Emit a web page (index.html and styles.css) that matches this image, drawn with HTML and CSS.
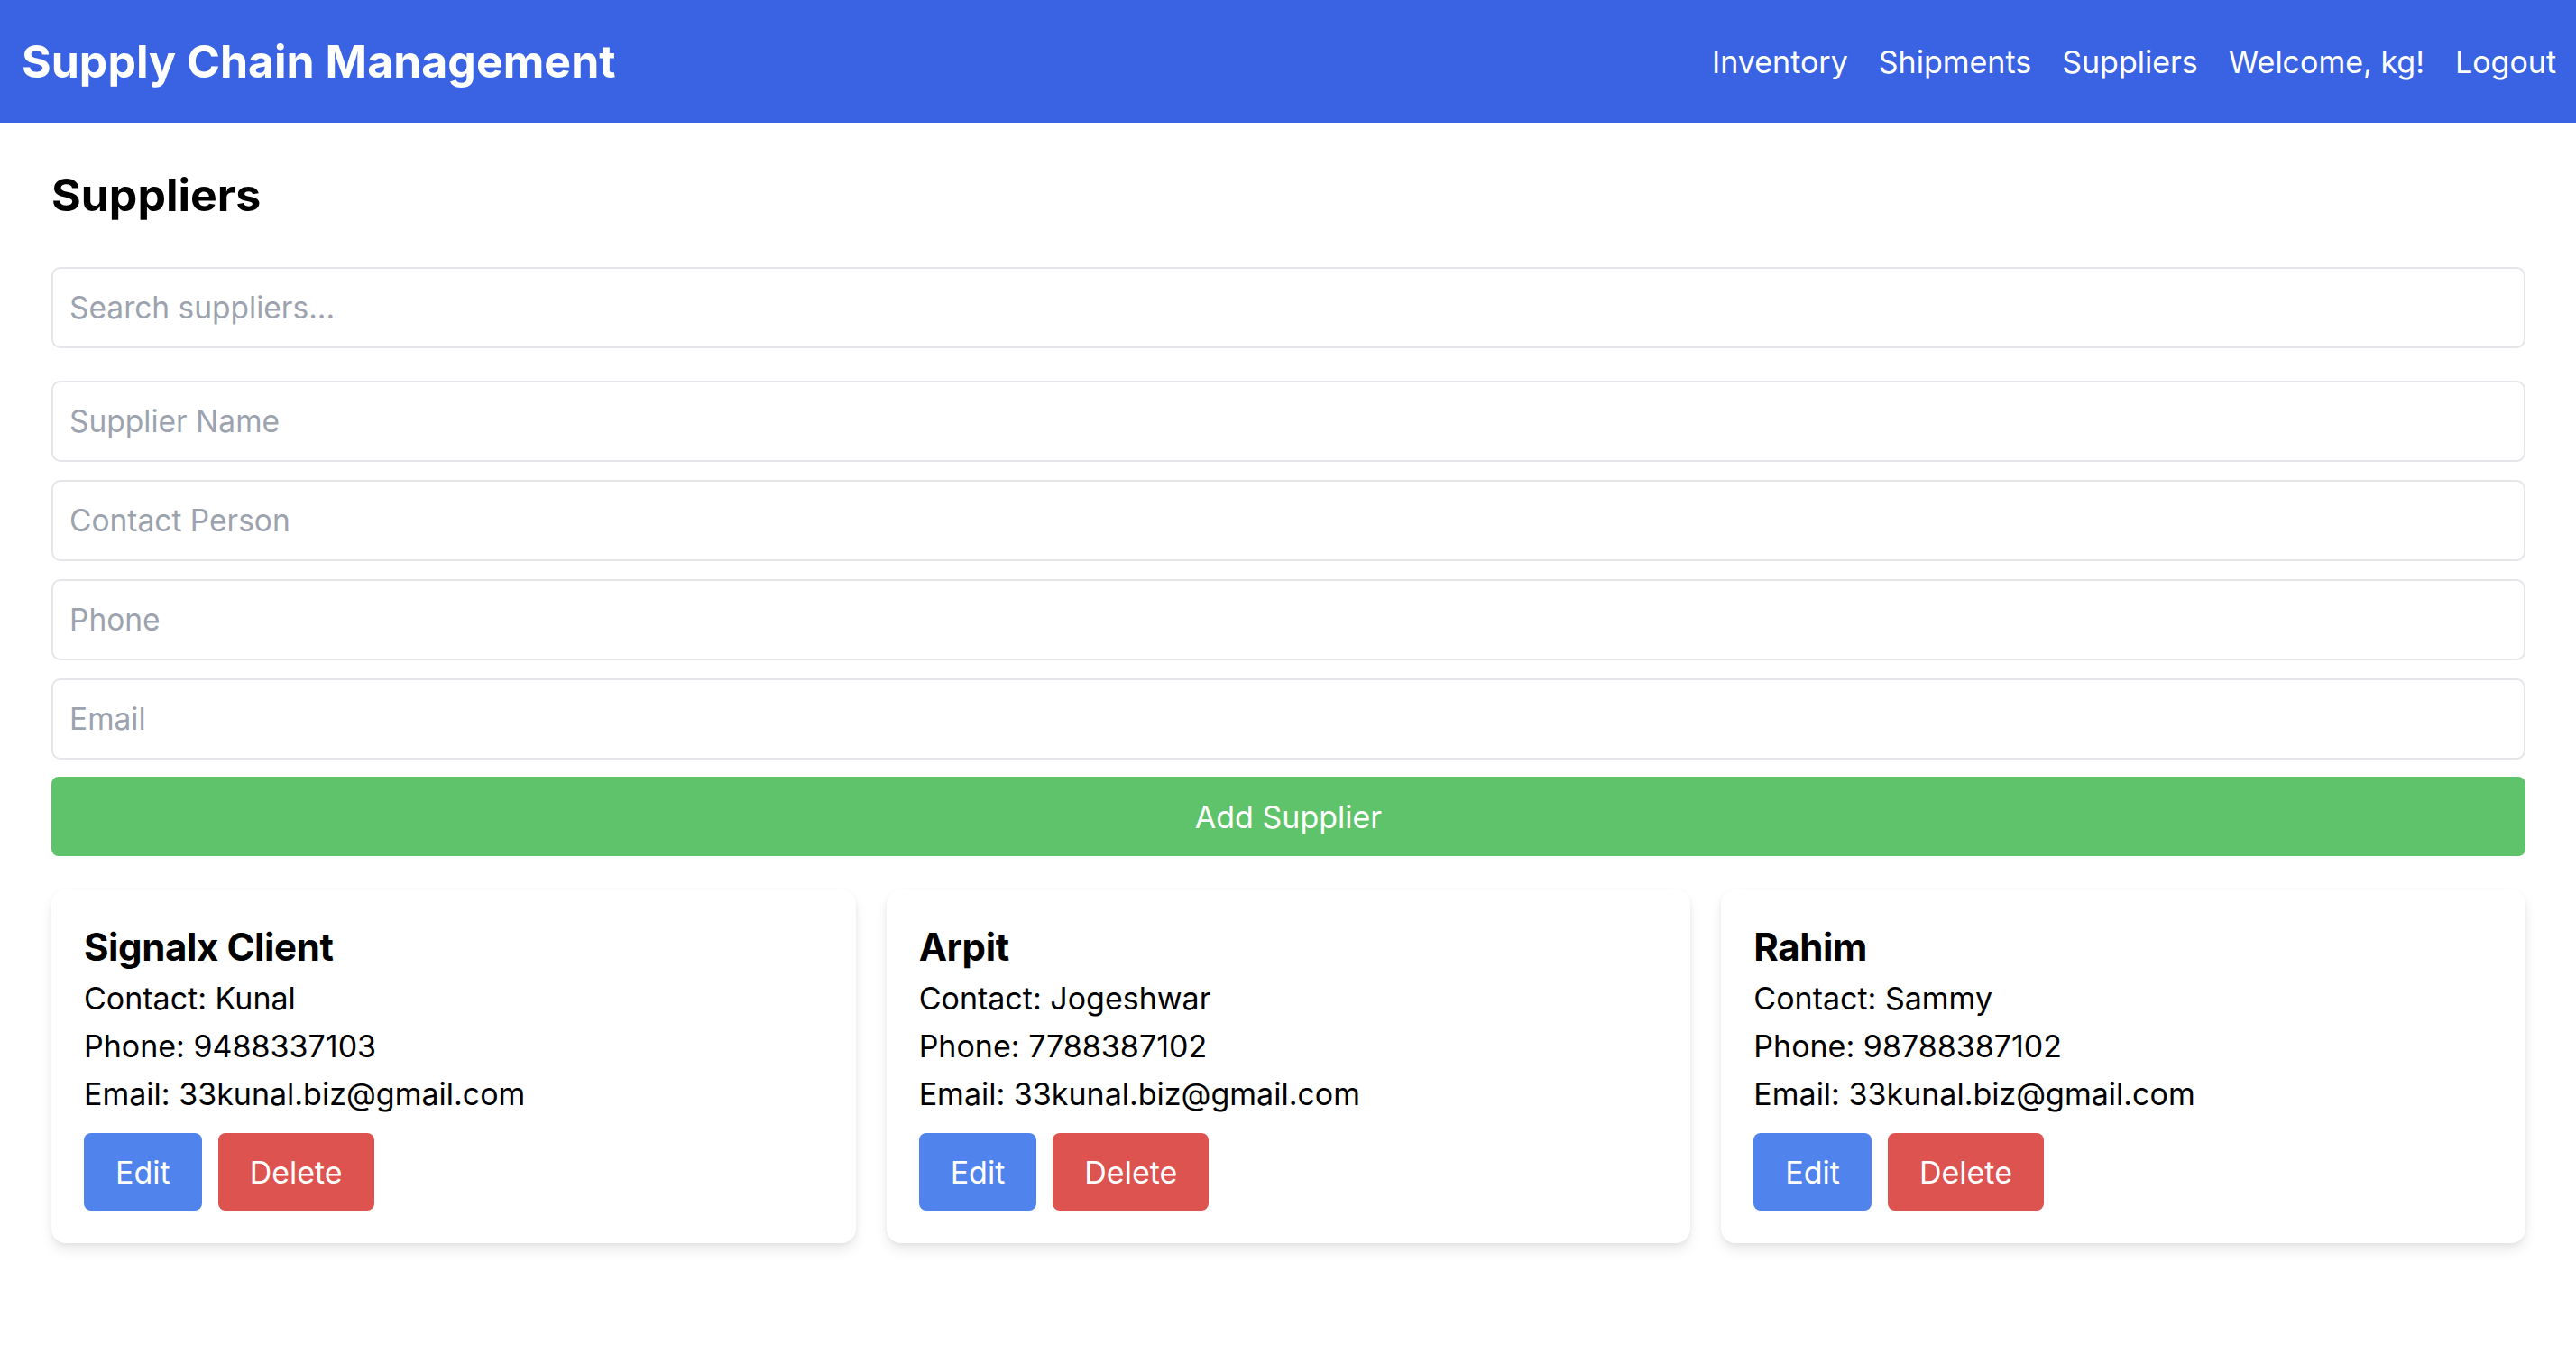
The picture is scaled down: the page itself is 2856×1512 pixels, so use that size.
FILE: index.html
```html
<!DOCTYPE html>
<html lang="en">
<head>
<meta charset="utf-8">
<title>Supply Chain Management</title>
<link rel="stylesheet" href="styles.css">
</head>
<body>
<header class="topbar">
  <div class="brand">Supply Chain Management</div>
  <nav class="nav">
    <a class="nav-link" href="#">Inventory</a>
    <a class="nav-link" href="#">Shipments</a>
    <a class="nav-link" href="#">Suppliers</a>
    <span class="nav-link">Welcome, kg!</span>
    <a class="nav-link" href="#">Logout</a>
  </nav>
</header>
<main class="page">
  <h1 class="page-title">Suppliers</h1>
  <input class="field search" type="text" placeholder="Search suppliers...">
  <form class="supplier-form">
    <input class="field" type="text" placeholder="Supplier Name">
    <input class="field" type="text" placeholder="Contact Person">
    <input class="field" type="text" placeholder="Phone">
    <input class="field" type="text" placeholder="Email">
    <button class="btn-add" type="button">Add Supplier</button>
  </form>
  <section class="cards">
    <div class="card">
      <h2 class="card-title">Signalx Client</h2>
      <p class="card-line">Contact: Kunal</p>
      <p class="card-line">Phone: 9488337103</p>
      <p class="card-line">Email: 33kunal.biz@gmail.com</p>
      <div class="card-actions">
        <button class="btn btn-edit" type="button">Edit</button>
        <button class="btn btn-delete" type="button">Delete</button>
      </div>
    </div>
    <div class="card">
      <h2 class="card-title">Arpit</h2>
      <p class="card-line">Contact: Jogeshwar</p>
      <p class="card-line">Phone: 7788387102</p>
      <p class="card-line">Email: 33kunal.biz@gmail.com</p>
      <div class="card-actions">
        <button class="btn btn-edit" type="button">Edit</button>
        <button class="btn btn-delete" type="button">Delete</button>
      </div>
    </div>
    <div class="card">
      <h2 class="card-title">Rahim</h2>
      <p class="card-line">Contact: Sammy</p>
      <p class="card-line">Phone: 98788387102</p>
      <p class="card-line">Email: 33kunal.biz@gmail.com</p>
      <div class="card-actions">
        <button class="btn btn-edit" type="button">Edit</button>
        <button class="btn btn-delete" type="button">Delete</button>
      </div>
    </div>
  </section>
</main>
</body>
</html>
```
FILE: styles.css
```css
* { box-sizing: border-box; }
html, body {
  margin: 0;
  padding: 0;
  background: #ffffff;
  font-family: Inter, "Noto Sans", "Liberation Sans", sans-serif;
  color: #000;
}
.topbar {
  height: 136px;
  background: #3a63e3;
  display: flex;
  align-items: center;
  justify-content: space-between;
  padding: 0 22px 0 24px;
  color: #fff;
}
.brand {
  font-size: 50px;
  font-weight: 700;
}
.nav {
  display: flex;
  align-items: center;
  gap: 34px;
}
.nav-link {
  color: #fff;
  text-decoration: none;
  font-size: 34px;
  font-weight: 400;
}
.page {
  padding: 48px 56px 40px 57px;
}
.page-title {
  margin: 0 0 48px 0;
  font-size: 50px;
  line-height: 64px;
  font-weight: 700;
}
.field {
  display: block;
  width: 100%;
  height: 90px;
  padding: 0 18px;
  border: 2px solid #e5e6ea;
  border-radius: 10px;
  font-family: inherit;
  font-size: 33.5px;
  color: #111;
  background: #fff;
  outline: none;
}
.field::placeholder { color: #9ca3af; }
.search { margin-bottom: 36px; }
.supplier-form {
  display: flex;
  flex-direction: column;
  gap: 20px;
  margin: 0 0 37px 0;
}
.btn-add {
  height: 88px;
  margin-top: -1px;
  border: none;
  border-radius: 8px;
  background: #5ec36a;
  color: #fff;
  font-family: inherit;
  font-size: 34px;
}
.cards {
  display: grid;
  grid-template-columns: repeat(3, 1fr);
  gap: 34px;
}
.card {
  background: #fff;
  border-radius: 16px;
  padding: 37px 36px 36px 36px;
  box-shadow: 0 8px 14px rgba(0,0,0,0.08), 0 2px 5px rgba(0,0,0,0.05);
}
.card-title {
  margin: 0 0 4px 0;
  font-size: 42px;
  line-height: 53px;
  font-weight: 700;
  letter-spacing: -0.4px;
}
.card-line {
  margin: 0;
  font-size: 34px;
  line-height: 53px;
}
.card-actions {
  display: flex;
  gap: 18px;
  margin-top: 17px;
}
.btn {
  height: 86px;
  padding: 0 35px;
  border: none;
  border-radius: 8px;
  color: #fff;
  font-family: inherit;
  font-size: 34px;
}
.btn-edit { background: #5083ec; }
.btn-delete { background: #dd5350; }
```
